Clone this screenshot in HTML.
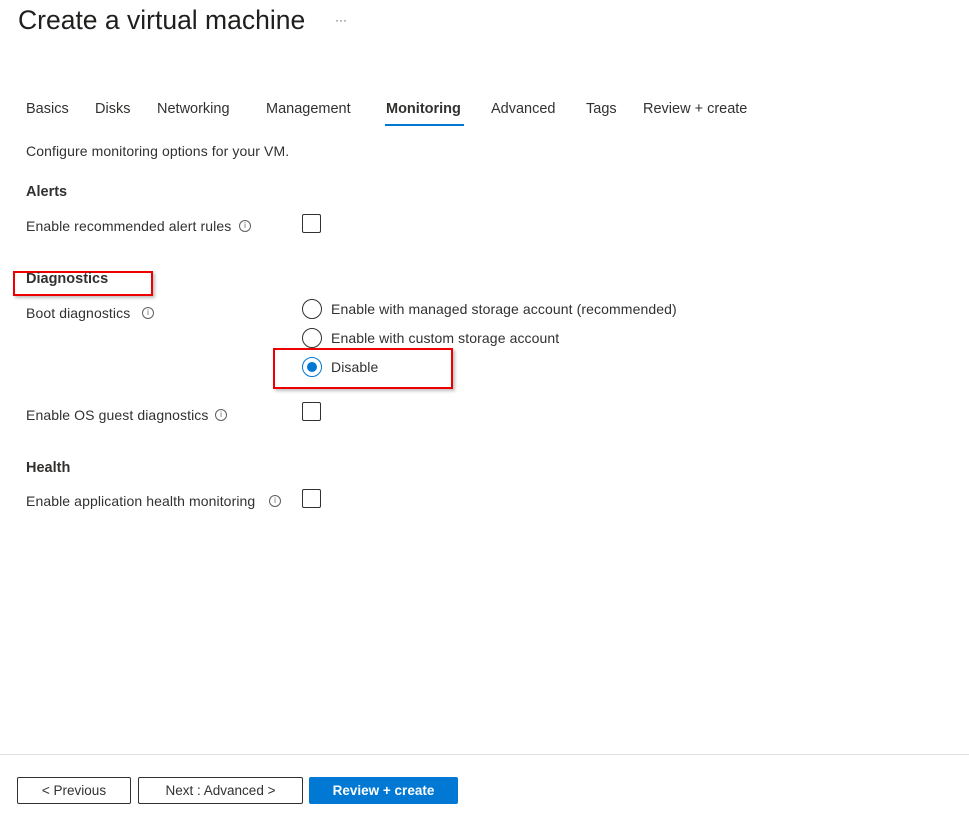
<!DOCTYPE html>
<html><head><meta charset="utf-8"><style>
body{margin:0;width:969px;height:820px;background:#fff;font-family:"Liberation Sans",sans-serif;color:#323130;position:relative;overflow:hidden}
.a{position:absolute;white-space:nowrap;line-height:1}
.t{font-size:14.5px;top:102px;color:#323130}
.s{font-size:14px;letter-spacing:0.1px}
.h{font-size:14.5px;font-weight:bold;color:#323130}
.cb{position:absolute;width:17px;height:17px;border:1px solid #323130;border-radius:2px}
.rd{position:absolute;width:18px;height:18px;border:1px solid #323130;border-radius:50%}
.i{position:absolute;width:10px;height:10px;border:1px solid #605e5c;border-radius:50%;font-size:8px;line-height:10px;text-align:center;color:#605e5c}
.red{position:absolute;border:2px solid #e00;box-shadow:2px 2px 3px rgba(0,0,0,.25)}
.btn{position:absolute;top:777px;height:25px;border:1px solid #323130;border-radius:2px;font-size:13.5px;text-align:center;line-height:25px;box-sizing:content-box}
</style></head><body>
<div class="a" style="left:18px;top:7px;font-size:26.5px;color:#201f1e">Create a virtual machine</div>
<div class="a" style="left:335px;top:14px;font-size:12px;color:#605e5c">···</div>
<div class="a t" style="left:26px">Basics</div>
<div class="a t" style="left:95px">Disks</div>
<div class="a t" style="left:157px">Networking</div>
<div class="a t" style="left:266px">Management</div>
<div class="a t" style="left:386px;font-weight:bold;font-size:14.5px;top:102px">Monitoring</div>
<div style="position:absolute;left:385px;top:124px;width:79px;height:2px;background:#0078d4"></div>
<div class="a t" style="left:491px">Advanced</div>
<div class="a t" style="left:586px">Tags</div>
<div class="a t" style="left:643px">Review + create</div>
<div class="a s" style="left:26px;top:144px">Configure monitoring options for your VM.</div>
<div class="a h" style="left:26px;top:185px">Alerts</div>
<div class="a s" style="left:26px;top:219px">Enable recommended alert rules</div>
<div class="i" style="left:239px;top:220px">i</div>
<div class="cb" style="left:302px;top:214px"></div>
<div class="red" style="left:13px;top:271px;width:136px;height:21px"></div>
<div class="a h" style="left:26px;top:272px">Diagnostics</div>
<div class="a s" style="left:26px;top:306px">Boot diagnostics</div>
<div class="i" style="left:142px;top:307px">i</div>
<div class="rd" style="left:302px;top:299px"></div>
<div class="a s" style="left:331px;top:302px">Enable with managed storage account (recommended)</div>
<div class="rd" style="left:302px;top:328px"></div>
<div class="a s" style="left:331px;top:331px">Enable with custom storage account</div>
<div class="rd" style="left:302px;top:357px;border-color:#0078d4"><div style="position:absolute;left:4px;top:4px;width:10px;height:10px;border-radius:50%;background:#0078d4"></div></div>
<div class="a s" style="left:331px;top:360px">Disable</div>
<div class="red" style="left:273px;top:348px;width:176px;height:37px"></div>
<div class="a s" style="left:26px;top:408px">Enable OS guest diagnostics</div>
<div class="i" style="left:215px;top:409px">i</div>
<div class="cb" style="left:302px;top:402px"></div>
<div class="a h" style="left:26px;top:461px">Health</div>
<div class="a s" style="left:26px;top:494px">Enable application health monitoring</div>
<div class="i" style="left:269px;top:495px">i</div>
<div class="cb" style="left:302px;top:489px"></div>
<div style="position:absolute;left:0;top:754px;width:969px;height:1px;background:#e1dfdd"></div>
<div class="btn" style="left:17px;width:112px">&lt; Previous</div>
<div class="btn" style="left:138px;width:163px">Next : Advanced &gt;</div>
<div class="btn" style="left:309px;width:149px;border:none;height:27px;line-height:27px;background:#0078d4;color:#fff;font-weight:bold">Review + create</div>
</body></html>
